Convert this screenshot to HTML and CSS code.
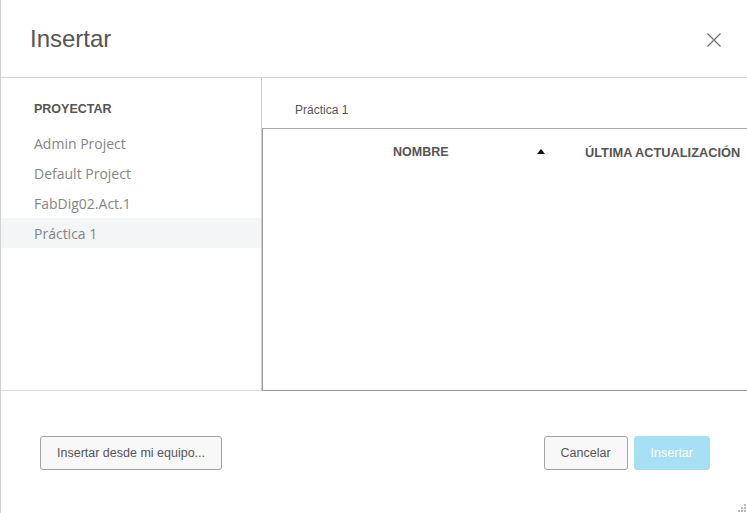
FILE: index.html
```html
<!DOCTYPE html>
<html lang="es">
<head>
<meta charset="utf-8">
<title>Insertar</title>
<link rel="stylesheet" href="styles.css">
</head>
<body>
<div class="dialog">
  <header class="header">
    <h1 class="title">Insertar</h1>
    <button class="close" aria-label="Cerrar">
      <svg width="14" height="14" viewBox="0 0 14 14"><path d="M0.5 0.5 L13.5 13.5 M13.5 0.5 L0.5 13.5" stroke="#6d6d6d" stroke-width="1.2" fill="none"/></svg>
    </button>
  </header>
  <div class="main">
    <aside class="sidebar">
      <div class="side-label">PROYECTAR</div>
      <ul class="projects">
        <li class="project">Admin Project</li>
        <li class="project">Default Project</li>
        <li class="project">FabDig02.Act.1</li>
        <li class="project selected">Práctica 1</li>
      </ul>
    </aside>
    <section class="panel">
      <div class="crumb">Práctica 1</div>
      <div class="table">
        <div class="thead">
          <div class="col-name">
            <span>NOMBRE</span>
            <span class="sort"></span>
          </div>
          <div class="col-date">ÚLTIMA ACTUALIZACIÓN</div>
        </div>
      </div>
    </section>
  </div>
  <footer class="footer">
    <button class="btn">Insertar desde mi equipo...</button>
    <div class="actions">
      <button class="btn">Cancelar</button>
      <button class="btn primary">Insertar</button>
    </div>
  </footer>
  <svg class="grip" width="9" height="8" viewBox="0 0 9 8">
    <rect x="7" y="0" width="2" height="2" fill="#bdbdbd"/>
    <rect x="4" y="3" width="2" height="2" fill="#bdbdbd"/>
    <rect x="7" y="3" width="2" height="2" fill="#bdbdbd"/>
    <rect x="1" y="6" width="2" height="2" fill="#bdbdbd"/>
    <rect x="4" y="6" width="2" height="2" fill="#bdbdbd"/>
    <rect x="7" y="6" width="2" height="2" fill="#bdbdbd"/>
  </svg>
</div>
</body>
</html>
```

FILE: styles.css
```css
* { box-sizing: border-box; }
html, body { margin: 0; padding: 0; background: #fff; }
body { font-family: "Liberation Sans", Arial, sans-serif; color: #555; }

.dialog {
  position: relative;
  width: 747px;
  height: 513px;
  border-left: 1px solid #cfcfcf;
  display: flex;
  flex-direction: column;
  overflow: hidden;
}

.header {
  height: 78px;
  flex: none;
  border-bottom: 1px solid #d6d6d6;
  display: flex;
  align-items: center;
  justify-content: space-between;
  padding: 0 26px 0 29px;
}
.title {
  margin: 0;
  font-weight: normal;
  font-size: 24px;
  color: #555;
  line-height: 30px;
  padding-top: 1px;
}
.close {
  border: 0;
  background: none;
  padding: 0;
  width: 14px;
  height: 14px;
  display: flex;
  margin-top: 3px;
}

.main {
  display: flex;
  height: 313px;
  flex: none;
}
.sidebar {
  width: 261px;
  flex: none;
  border-right: 1px solid #cfcfcf;
  border-bottom: 1px solid #dcdcdc;
  padding-top: 16px;
}
.side-label {
  font-weight: bold;
  font-size: 12.5px;
  line-height: 30px;
  padding-left: 33px;
  color: #555;
  margin-bottom: 4px;
}
.projects { list-style: none; margin: 0; padding: 0; }
.project {
  font-family: "Open Sans", sans-serif;
  font-size: 14px;
  color: #858585;
  height: 30px;
  line-height: 32px;
  padding-left: 33px;
}
.project.selected { background: #f4f5f7; }

.panel {
  flex: 1;
  display: flex;
  flex-direction: column;
  min-width: 0;
}
.crumb {
  height: 50px;
  flex: none;
  padding: 24px 0 0 33px;
  font-size: 12px;
  line-height: 16px;
  color: #555;
}
.table {
  flex: 1;
  border-top: 1px solid #ababab;
  border-left: 1px solid #9c9c9c;
  border-bottom: 1px solid #9c9c9c;
}
.thead {
  display: flex;
  height: 46px;
  align-items: center;
  padding-left: 130px;
  font-weight: bold;
  font-size: 12.5px;
  color: #555;
  white-space: nowrap;
}
.col-name {
  width: 192px;
  display: flex;
  align-items: center;
  justify-content: space-between;
  padding-right: 40px;
  flex: none;
}
.sort {
  width: 0;
  height: 0;
  border-left: 4px solid transparent;
  border-right: 4px solid transparent;
  border-bottom: 5px solid #111;
  margin-top: -1px;
}
.col-date { flex: none; font-size: 12.8px; }

.footer {
  flex: 1;
  display: flex;
  justify-content: space-between;
  align-items: flex-start;
  padding: 45px 37px 0 39px;
}
.actions { display: flex; gap: 6px; }
.btn {
  font-family: "Liberation Sans", Arial, sans-serif;
  font-size: 12.5px;
  color: #555;
  height: 34px;
  line-height: 32px;
  padding: 0 16px;
  background: #f8f8f8;
  border: 1px solid #a3a3a3;
  border-radius: 3px;
}
.primary {
  background: #a7dff4;
  border-color: #a7dff4;
  color: #fff;
  padding: 0 16px;
}

.grip {
  position: absolute;
  right: 1px;
  bottom: 1px;
}
```
